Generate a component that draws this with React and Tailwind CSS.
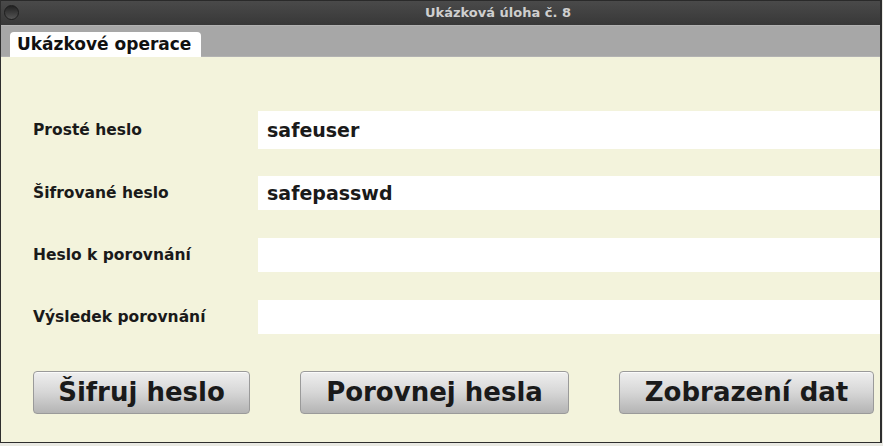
const rows = [
  { label: "Prosté heslo", value: "safeuser", h: "h-[38px]", mt: "mt-[54px]" },
  { label: "Šifrované heslo", value: "safepasswd", h: "h-[34px]", mt: "mt-[27px]" },
  { label: "Heslo k porovnání", value: "", h: "h-[34px]", mt: "mt-[28px]" },
  { label: "Výsledek porovnání", value: "", h: "h-[34px]", mt: "mt-[28px]" },
]

function Button({ children, className }) {
  return (
    <button
      className={
        "h-[43px] rounded-[4px] border border-[#9a9a9a] bg-gradient-to-b from-[#efefef] via-[#d6d6d6] to-[#b4b4b4] text-[26px] font-bold text-[#1a1a1a] shadow-[inset_0_1px_0_#fafafa] " +
        className
      }
    >
      {children}
    </button>
  )
}

export default function App() {
  return (
    <div className="w-[883px] h-[446px] bg-[#e9e9e3] font-['DejaVu_Sans',sans-serif]">
      <div className="w-[882px] h-[443px] flex flex-col border-l border-r-2 border-b border-[#2e2e2e]">
        <div className="relative h-[25px] bg-gradient-to-b from-[#4a4a4a] to-[#383838] border-t border-[#2a2a2a] flex items-center justify-center">
          <div className="absolute left-[3px] top-[4px] w-[15px] h-[15px] rounded-full bg-gradient-to-b from-[#222] to-[#555] border border-[#1e1e1e]" />
          <span className="ml-[115px] text-[13px] font-bold text-[#cfcfcf]">Ukázková úloha č. 8</span>
        </div>
        <div className="h-[32px] bg-[#a7a7a7] border-t border-[#b2b2b2] border-b border-[#7c7c7c] flex items-end pl-[9px]">
          <div className="h-[25px] w-[191px] -mb-px bg-white rounded-t-[4px] flex items-center pl-[7px] text-[17px] font-bold text-[#111]">
            Ukázkové operace
          </div>
        </div>
        <div className="flex-1 bg-[#f3f3dc] flex flex-col">
          {rows.map((r) => (
            <div key={r.label} className={"flex items-center " + r.mt}>
              <div className="w-[257px] pl-[32px] pt-[2px] text-[15.5px] font-bold text-[#1a1a1a]">{r.label}</div>
              <div className={"flex-1 bg-white flex items-center pl-[9px] text-[19px] font-bold text-[#1a1a1a] " + r.h}>
                {r.value}
              </div>
            </div>
          ))}
          <div className="flex mt-[37px] pl-[32px]">
            <Button className="w-[217px]">Šifruj heslo</Button>
            <Button className="w-[269px] ml-[50px]">Porovnej hesla</Button>
            <Button className="w-[255px] ml-[50px]">Zobrazení dat</Button>
          </div>
        </div>
      </div>
    </div>
  )
}
